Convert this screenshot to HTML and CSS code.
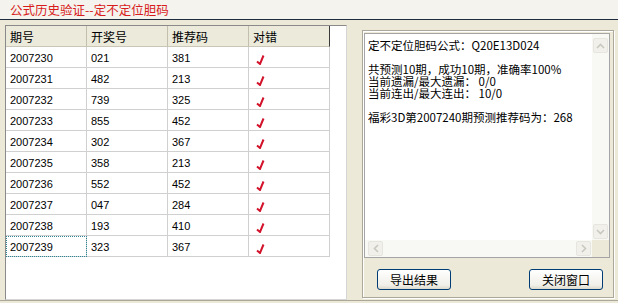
FILE: index.html
```html
<!DOCTYPE html>
<html lang="zh-CN">
<head>
    <meta charset="UTF-8">
    <title>公式历史验证</title>
    <link rel="stylesheet" href="styles.css">
</head>
<body>
<div class="window">
    <!-- Title strip -->
    <div class="title">公式历史验证--定不定位胆码</div>

    <div class="main">
        <!-- History list -->
        <div class="list">
            <div class="list-row list-head">
                <div class="cell">期号</div>
                <div class="cell">开奖号</div>
                <div class="cell">推荐码</div>
                <div class="cell">对错</div>
            </div>
            <div class="list-row">
                <div class="cell">2007230</div><div class="cell">021</div><div class="cell">381</div>
                <div class="cell ok"><svg width="9" height="10" viewBox="0 0 9 10"><path d="M1 6.5 L4 9 L7.5 0.5" fill="none" stroke="#d3122b" stroke-width="2"/></svg></div>
            </div>
            <div class="list-row">
                <div class="cell">2007231</div><div class="cell">482</div><div class="cell">213</div>
                <div class="cell ok"><svg width="9" height="10" viewBox="0 0 9 10"><path d="M1 6.5 L4 9 L7.5 0.5" fill="none" stroke="#d3122b" stroke-width="2"/></svg></div>
            </div>
            <div class="list-row">
                <div class="cell">2007232</div><div class="cell">739</div><div class="cell">325</div>
                <div class="cell ok"><svg width="9" height="10" viewBox="0 0 9 10"><path d="M1 6.5 L4 9 L7.5 0.5" fill="none" stroke="#d3122b" stroke-width="2"/></svg></div>
            </div>
            <div class="list-row">
                <div class="cell">2007233</div><div class="cell">855</div><div class="cell">452</div>
                <div class="cell ok"><svg width="9" height="10" viewBox="0 0 9 10"><path d="M1 6.5 L4 9 L7.5 0.5" fill="none" stroke="#d3122b" stroke-width="2"/></svg></div>
            </div>
            <div class="list-row">
                <div class="cell">2007234</div><div class="cell">302</div><div class="cell">367</div>
                <div class="cell ok"><svg width="9" height="10" viewBox="0 0 9 10"><path d="M1 6.5 L4 9 L7.5 0.5" fill="none" stroke="#d3122b" stroke-width="2"/></svg></div>
            </div>
            <div class="list-row">
                <div class="cell">2007235</div><div class="cell">358</div><div class="cell">213</div>
                <div class="cell ok"><svg width="9" height="10" viewBox="0 0 9 10"><path d="M1 6.5 L4 9 L7.5 0.5" fill="none" stroke="#d3122b" stroke-width="2"/></svg></div>
            </div>
            <div class="list-row">
                <div class="cell">2007236</div><div class="cell">552</div><div class="cell">452</div>
                <div class="cell ok"><svg width="9" height="10" viewBox="0 0 9 10"><path d="M1 6.5 L4 9 L7.5 0.5" fill="none" stroke="#d3122b" stroke-width="2"/></svg></div>
            </div>
            <div class="list-row">
                <div class="cell">2007237</div><div class="cell">047</div><div class="cell">284</div>
                <div class="cell ok"><svg width="9" height="10" viewBox="0 0 9 10"><path d="M1 6.5 L4 9 L7.5 0.5" fill="none" stroke="#d3122b" stroke-width="2"/></svg></div>
            </div>
            <div class="list-row">
                <div class="cell">2007238</div><div class="cell">193</div><div class="cell">410</div>
                <div class="cell ok"><svg width="9" height="10" viewBox="0 0 9 10"><path d="M1 6.5 L4 9 L7.5 0.5" fill="none" stroke="#d3122b" stroke-width="2"/></svg></div>
            </div>
            <div class="list-row">
                <div class="cell focused">2007239</div><div class="cell">323</div><div class="cell">367</div>
                <div class="cell ok"><svg width="9" height="10" viewBox="0 0 9 10"><path d="M1 6.5 L4 9 L7.5 0.5" fill="none" stroke="#d3122b" stroke-width="2"/></svg></div>
            </div>
        </div>

        <!-- Result panel -->
        <div class="side">
            <div class="memo">
                <div class="memo-text">
                    <div>定不定位胆码公式：Q20E13D024</div>
                    <div><br></div>
                    <div>共预测10期，成功10期，准确率100%</div>
                    <div>当前遗漏/最大遗漏： 0/0</div>
                    <div>当前连出/最大连出： 10/0</div>
                    <div><br></div>
                    <div>福彩3D第2007240期预测推荐码为：268</div>
                </div>
                <div class="vscroll">
                    <div class="arrow"><svg width="9" height="6" viewBox="0 0 9 6"><path d="M1 5 L4.5 1.5 L8 5" fill="none" stroke="#c9c8c0" stroke-width="1.6"/></svg></div>
                    <div class="arrow"><svg width="9" height="6" viewBox="0 0 9 6"><path d="M1 1 L4.5 4.5 L8 1" fill="none" stroke="#c9c8c0" stroke-width="1.6"/></svg></div>
                </div>
                <div class="hscroll">
                    <div class="arrow"><svg width="6" height="9" viewBox="0 0 6 9"><path d="M5 1 L1.5 4.5 L5 8" fill="none" stroke="#c9c8c0" stroke-width="1.6"/></svg></div>
                    <div class="arrow"><svg width="6" height="9" viewBox="0 0 6 9"><path d="M1 1 L4.5 4.5 L1 8" fill="none" stroke="#c9c8c0" stroke-width="1.6"/></svg></div>
                </div>
                <div class="corner"></div>
            </div>
            <div class="buttons">
                <button class="btn">导出结果</button>
                <button class="btn">关闭窗口</button>
            </div>
        </div>
    </div>
</div>
</body>
</html>
```

FILE: styles.css
```css
/* General styles */
body {
    margin: 0;
    background-color: #ece9d8;
    font-family: "Noto Sans CJK SC", sans-serif;
    font-size: 12px;
    color: #000;
}

.window {
    width: 618px;
    height: 303px;
    overflow: hidden;
}

/* Title strip */
.title {
    height: 19px;
    line-height: 19px;
    padding-left: 10px;
    background-color: #f4f3ee;
    border-bottom: 1px solid #1e2c40;
    color: #d81c1c;
    font-size: 12.5px;
}

.main {
    display: flex;
    align-items: flex-start;
    height: 281px;
    box-sizing: border-box;
    border-bottom: 1px solid #aca899;
}

/* History list */
.list {
    margin: 5px 0 0 5px;
    width: 342px;
    height: 275px;
    box-sizing: border-box;
    background-color: #fff;
    border: 1px solid;
    border-color: #8a8a8a #d6d6d6 #d6d6d6 #8a8a8a;
}

.list-row {
    display: grid;
    grid-template-columns: repeat(4, 81px);
}

.cell {
    height: 21px;
    box-sizing: border-box;
    padding: 3px 0 0 4px;
    line-height: 17px;
    border-right: 1px solid #d0d0d0;
    border-bottom: 1px solid #d0d0d0;
    font-family: "Liberation Sans", "Noto Sans CJK SC", sans-serif;
    font-size: 11px;
}

.list-head .cell {
    padding-top: 1px;
    line-height: 19px;
    background-color: #ebeadb;
    border-right-color: #c2bfae;
    border-bottom-color: #cbc7b8;
    font-family: "Noto Sans CJK SC", sans-serif;
    font-size: 12px;
}

.list-head .cell:last-child {
    border-right-color: #3a3a3a;
}

.cell.ok {
    padding: 8px 0 0 7px;
    line-height: 0;
}

.cell.focused {
    outline: 1px dotted #2b8597;
    outline-offset: -1px;
}

/* Result panel */
.side {
    margin: 10px 0 0 15px;
    width: 252px;
    height: 268px;
    box-sizing: border-box;
    padding: 2px 3px 0 1px;
    border: 1px solid #aca899;
    box-shadow: inset 1px 1px 0 #fff, 1px 1px 0 #fff;
}

.memo {
    height: 225px;
    box-sizing: border-box;
    border: 1px solid #a5a5a5;
    background-color: #fff;
    display: grid;
    grid-template-columns: 1fr 17px;
    grid-template-rows: 1fr 17px;
}

.memo-text {
    padding: 5px 3px;
    line-height: 12px;
    font-size: 11.5px;
    white-space: nowrap;
    overflow: hidden;
}

.vscroll,
.hscroll {
    display: flex;
    justify-content: space-between;
    background-color: #f8f8f4;
}

.vscroll {
    flex-direction: column;
    padding: 4px 1px 1px 1px;
}

.hscroll {
    padding: 1px 1px 1px 3px;
}

.arrow {
    width: 15px;
    height: 15px;
    box-sizing: border-box;
    display: flex;
    align-items: center;
    justify-content: center;
    border: 1px solid #e6e5de;
    border-radius: 2px;
    background-color: #f1f0ea;
}

.corner {
    background-color: #ece9d8;
}

/* Buttons */
.buttons {
    display: flex;
    justify-content: space-between;
    margin-top: 11px;
    padding: 0 7px 0 13px;
}

.btn {
    width: 74px;
    height: 21px;
    padding: 0;
    border: 1px solid #003c74;
    border-radius: 3px;
    background: linear-gradient(#ffffff, #f0efe8 80%, #dcd9cc);
    font-family: "Noto Sans CJK SC", sans-serif;
    font-size: 12px;
    color: #000;
}
```
